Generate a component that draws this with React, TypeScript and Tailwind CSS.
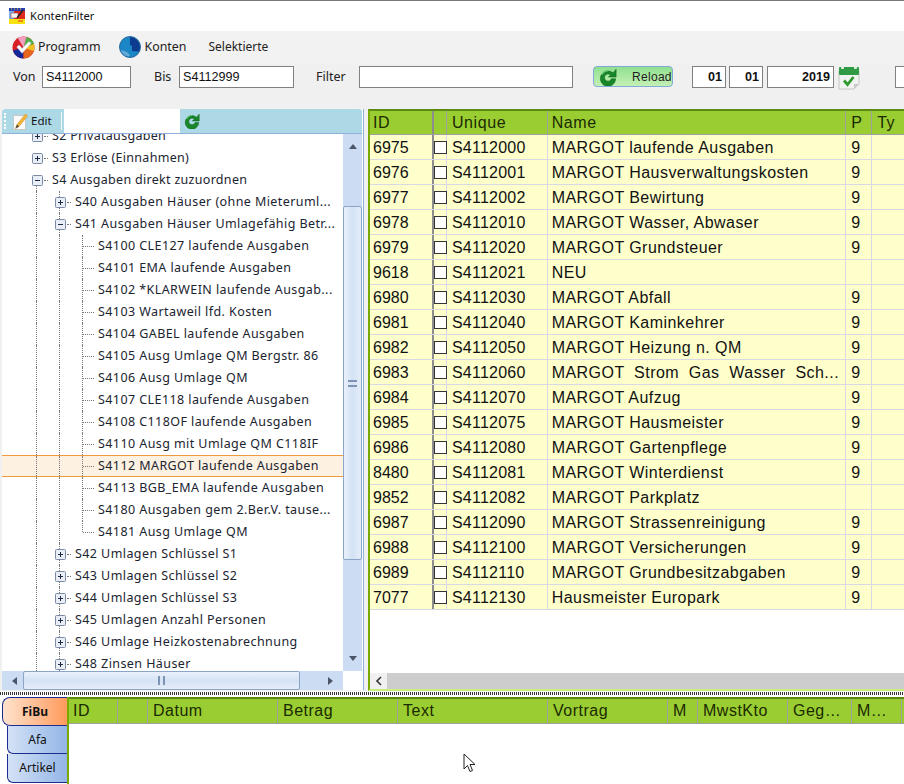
import React from "react";

const Expander = ({ open }: { open?: boolean }) => (
  <svg width="11" height="11" viewBox="0 0 11 11" className="shrink-0 relative">
    <rect x="0.5" y="0.5" width="10" height="10" rx="1" fill="#e9edf5" stroke="#7d8aa3" />
    <path d="M3 5.5h5" stroke="#1d2a44" />
    {!open && <path d="M5.5 3v5" stroke="#1d2a44" />}
  </svg>
);

const VLine = ({ half }: { half?: boolean }) => (
  <div className="w-px h-full shrink-0 flex flex-col">
    <div className={(half ? "h-1/2" : "h-full") + " border-l border-dotted border-[#777]"} />
  </div>
);

const ExpCell = ({ open, guide, lower }: { open?: boolean; guide?: boolean; lower?: boolean }) => (
  <div className="w-[11px] h-full shrink-0 -ml-[4px] relative flex items-center">
    {guide && (
      <div className="absolute left-[4px] top-0 h-full">
        <VLine />
      </div>
    )}
    {lower && (
      <div className="absolute left-[4px] top-[16px] h-[6px] w-px border-l border-dotted border-[#777]" />
    )}
    <Expander open={open} />
  </div>
);

const Conn = ({ w }: { w: string }) => <div className={w + " h-0 shrink-0 border-t border-dotted border-[#777] mr-[4px]"} />;

type Row = { t: string; lvl: 1 | 2 | 3; open?: boolean; sel?: boolean; last?: boolean };
const rows: Row[] = [
  { t: "S2 Privatausgaben", lvl: 1 },
  { t: "S3 Erlöse (Einnahmen)", lvl: 1 },
  { t: "S4 Ausgaben direkt zuzuordnen", lvl: 1, open: true },
  { t: "S40 Ausgaben Häuser (ohne Mieteruml...", lvl: 2 },
  { t: "S41 Ausgaben Häuser Umlagefähig Betr...", lvl: 2, open: true },
  { t: "S4100 CLE127 laufende Ausgaben", lvl: 3 },
  { t: "S4101 EMA laufende Ausgaben", lvl: 3 },
  { t: "S4102 *KLARWEIN laufende Ausgab...", lvl: 3 },
  { t: "S4103 Wartaweil lfd. Kosten", lvl: 3 },
  { t: "S4104 GABEL laufende Ausgaben", lvl: 3 },
  { t: "S4105 Ausg Umlage QM Bergstr. 86", lvl: 3 },
  { t: "S4106 Ausg Umlage QM", lvl: 3 },
  { t: "S4107 CLE118 laufende Ausgaben", lvl: 3 },
  { t: "S4108 C118OF laufende Ausgaben", lvl: 3 },
  { t: "S4110 Ausg mit Umlage QM C118IF", lvl: 3 },
  { t: "S4112 MARGOT laufende Ausgaben", lvl: 3, sel: true },
  { t: "S4113 BGB_EMA laufende Ausgaben", lvl: 3 },
  { t: "S4180 Ausgaben gem 2.Ber.V. tause...", lvl: 3 },
  { t: "S4181 Ausg Umlage QM", lvl: 3, last: true },
  { t: "S42 Umlagen Schlüssel S1", lvl: 2 },
  { t: "S43 Umlagen Schlüssel S2", lvl: 2 },
  { t: "S44 Umlagen Schlüssel S3", lvl: 2 },
  { t: "S45 Umlagen Anzahl Personen", lvl: 2 },
  { t: "S46 Umlage Heizkostenabrechnung", lvl: 2 },
  { t: "S48 Zinsen Häuser", lvl: 2 },
];

const TreeRow = ({ r }: { r: Row }) => (
  <div
    className={
      "flex items-center h-[22px] pl-[34px] text-[12.5px] text-[#1b2430] whitespace-nowrap font-['Noto_Sans',sans-serif] " +
      (r.lvl === 1 ? "tracking-[0.3px] " : "tracking-[0.42px] ") +
      (r.sel ? "bg-[#fdf1e2] border-y border-[#f09a3e]" : "")
    }
  >
    {r.lvl === 1 && (
      <>
        <ExpCell open={r.open} lower={r.open} />
        <div className="w-px shrink-0" />
        <Conn w="w-[4px]" />
      </>
    )}
    {r.lvl === 2 && (
      <>
        <VLine />
        <div className="w-[22px] shrink-0" />
        <ExpCell open={r.open} guide />
        <div className="w-px shrink-0" />
        <Conn w="w-[4px]" />
      </>
    )}
    {r.lvl === 3 && (
      <>
        <VLine />
        <div className="w-[22px] shrink-0" />
        <VLine />
        <div className="w-[22px] shrink-0" />
        <VLine half={r.last} />
        <Conn w="w-[11px]" />
      </>
    )}
    <span>{r.t}</span>
  </div>
);

const data: [string, string, string, string][] = [
  ["6975", "S4112000", "MARGOT laufende Ausgaben", "9"],
  ["6976", "S4112001", "MARGOT Hausverwaltungskosten", "9"],
  ["6977", "S4112002", "MARGOT Bewirtung", "9"],
  ["6978", "S4112010", "MARGOT Wasser, Abwaser", "9"],
  ["6979", "S4112020", "MARGOT Grundsteuer", "9"],
  ["9618", "S4112021", "NEU", ""],
  ["6980", "S4112030", "MARGOT Abfall", "9"],
  ["6981", "S4112040", "MARGOT Kaminkehrer", "9"],
  ["6982", "S4112050", "MARGOT Heizung n. QM", "9"],
  ["6983", "S4112060", "MARGOT  Strom  Gas  Wasser  Sch...", "9"],
  ["6984", "S4112070", "MARGOT Aufzug", "9"],
  ["6985", "S4112075", "MARGOT Hausmeister", "9"],
  ["6986", "S4112080", "MARGOT Gartenpflege", "9"],
  ["8480", "S4112081", "MARGOT Winterdienst", "9"],
  ["9852", "S4112082", "MARGOT Parkplatz", ""],
  ["6987", "S4112090", "MARGOT Strassenreinigung", "9"],
  ["6988", "S4112100", "MARGOT Versicherungen", "9"],
  ["6989", "S4112110", "MARGOT Grundbesitzabgaben", "9"],
  ["7077", "S4112130", "Hausmeister Europark", "9"],
];

const Field = ({ v, w, cls }: { v?: string; w: string; cls?: string }) => (
  <div
    className={
      w +
      " h-[22px] shrink-0 border border-[#808080] bg-white px-[3px] text-[12.6px] leading-[21px] text-[#111] font-['Liberation_Sans',sans-serif] " +
      (cls || "")
    }
  >
    {v}
  </div>
);

const ReloadIcon = ({ s }: { s: number }) => (
  <svg width={s} height={s} viewBox="0 0 20 20" className="shrink-0">
    <path d="M15.600 5.400A8.500 8.500 0 1 0 18.500 12h-4.700a4 4 0 1 1-1-4.300L10.500 10H19V1.500z" fill="#17872a" stroke="#0d5e1c" strokeWidth="0.6" />
    <path d="M3.500 7.500A7 7 0 0 1 10 3.200" stroke="#62c46c" strokeWidth="1.400" fill="none" />
  </svg>
);

const ProgrammIcon = () => (
  <svg width="23" height="23" viewBox="0 0 24 24" className="shrink-0">
    <circle cx="12" cy="12" r="11.500" fill="#d81f26" />
    <path d="M1 15A11.500 11.500 0 0 0 12 23.500L12 12z" fill="#16279a" />
    <path d="M12 23.500A11.500 11.500 0 0 0 22.500 16L12 12z" fill="#e8651e" />
    <path d="M22.500 16A11.500 11.500 0 0 0 23 8L12 12z" fill="#f0c020" />
    <path d="M23 8A11.500 11.500 0 0 0 15 1L12 12z" fill="#4fb04a" />
    <path d="M15 1A11.500 11.500 0 0 0 6 2.200L12 12z" fill="#f2a0c0" />
    <path d="M5 11.500l5.500 6.500L20 7.500l-2.500-1.500-7 7-3-3.500z" fill="#fff" stroke="#cfd8ee" strokeWidth="0.5" />
  </svg>
);

const GlobeIcon = () => (
  <svg width="22" height="22" viewBox="0 0 22 22" className="shrink-0">
    <circle cx="11" cy="11" r="10.500" fill="#1b86c6" stroke="#2c6a9f" />
    <path d="M11 1a10 10 0 0 1 10 10c0 2-.5 3-1.500 4.500L13 15v-5l-2-1z" fill="#0d3c8e" />
    <path d="M2 14c3 1 7 1 9 6 -4 1-8-2-9-6z" fill="#63a9d6" />
  </svg>
);

const CalendarIcon = () => (
  <svg width="22" height="25" viewBox="0 0 22 25" className="shrink-0">
    <path d="M1 6h20v13l-5 5H1z" fill="#f1f3f1" stroke="#c4c8c4" />
    <rect x="1" y="2" width="20" height="8" rx="1" fill="#2f9b45" />
    <rect x="3" y="1" width="3" height="3" rx="1" fill="#e3efe5" />
    <rect x="16" y="1" width="3" height="3" rx="1" fill="#e3efe5" />
    <path d="M6 15.500l3.500 4 6-7.500" stroke="#2f9b2f" strokeWidth="2.800" fill="none" />
    <path d="M16 24l5-5h-5z" fill="#c9c9c9" />
  </svg>
);

const PencilIcon = () => (
  <svg width="15" height="17" viewBox="0 0 15 17" className="shrink-0">
    <rect x="0.500" y="2.500" width="12" height="14" fill="#fafafa" stroke="#c8c8c8" />
    <path d="M2.500 15.500L4 11.500 12.500 1l2 2L6 13.500z" fill="#f3b43a" stroke="#c98a1a" strokeWidth="0.5" />
    <path d="M2.500 15.500L4 11.500l2 2z" fill="#444" />
  </svg>
);

const AppIcon = () => (
  <svg width="16" height="16" viewBox="0 0 16 16" className="shrink-0">
    <rect width="16" height="16" fill="#fff" />
    <rect y="0" width="16" height="3" fill="#2b3fa8" />
    <path d="M2 1h1M5 1h1M8 1h1M11 1h1" stroke="#f0d050" />
    <rect y="3" width="5" height="8" fill="#7fb5e8" />
    <rect x="5" y="3" width="11" height="8" fill="#e02a20" />
    <rect x="2" y="5" width="7" height="5" fill="#f4f4f4" stroke="#8a2030" strokeWidth="0.5" />
    <rect y="11" width="16" height="5" fill="#f7e10e" />
    <path d="M9 13h5" stroke="#e02a20" />
    <path d="M8 10l6-8" stroke="#222" strokeWidth="1.400" />
  </svg>
);

const Tri = ({ d }: { d: "u" | "d" | "l" | "r" }) => {
  const p = { u: "M0 6L4 1l4 5z", d: "M0 2h8L4 7z", l: "M6 0v8L1 4z", r: "M2 0v8l5-4z" }[d];
  return (
    <svg width="8" height="8" viewBox="0 0 8 8" className="shrink-0">
      <path d={p} fill="#4a5568" />
    </svg>
  );
};

const headerCols = [
  ["ID", "w-[49px] pl-[4px]"],
  ["", "w-[30px] pl-[5px]"],
  ["Datum", "w-[130px] pl-[5px]"],
  ["Betrag", "w-[120px] pl-[5px]"],
  ["Text", "w-[150px] pl-[5px]"],
  ["Vortrag", "w-[120px] pl-[5px]"],
  ["M", "w-[30px] pl-[5px]"],
  ["MwstKto", "w-[90px] pl-[5px]"],
  ["Geg…", "w-[64px] pl-[5px]"],
  ["M…", "w-[50px] pl-[5px]"],
];

const Label = ({ t, w }: { t: string; w: string }) => (
  <span className={w + " shrink-0 leading-[22px] font-['Noto_Sans',sans-serif]"}>{t}</span>
);

export default function App() {
  return (
    <div className="w-[904px] h-[784px] overflow-hidden bg-[#f0f0f0] flex flex-col font-['Liberation_Sans',sans-serif]">
      {/* title */}
      <div className="h-[31px] shrink-0 bg-white border-t border-[#777] flex items-center pl-[9px] gap-[5px]">
        <AppIcon />
        <span className="text-[11.2px] text-[#111] font-['Noto_Sans',sans-serif]">KontenFilter</span>
      </div>
      {/* menu */}
      <div className="h-[32px] shrink-0 bg-[#f2f2f2] flex items-center pl-[12px] text-[12.4px] text-[#222] font-['Noto_Sans',sans-serif]">
        <ProgrammIcon />
        <span className="ml-[3px]">Programm</span>
        <div className="ml-[19px]"><GlobeIcon /></div>
        <span className="ml-[3px]">Konten</span>
        <span className="ml-[22px] text-[12px]">Selektierte</span>
      </div>
      {/* filter row */}
      <div className="h-[46px] shrink-0 flex items-start pt-[3px] text-[12.5px] text-[#222] overflow-hidden">
        <Label t="Von" w="ml-[13px] w-[29px]" />
        <Field v="S4112000" w="w-[89px]" />
        <Label t="Bis" w="ml-[23px] w-[25px]" />
        <Field v="S4112999" w="w-[115px]" />
        <Label t="Filter" w="ml-[22px] w-[43px]" />
        <Field w="w-[214px]" />
        <div className="ml-[20px] w-[80px] h-[21px] shrink-0 rounded-[4px] border border-[#7fa9d8] bg-gradient-to-b from-[#8fe08f] to-[#c4f0b4] flex items-center pl-[5px] gap-[15px]">
          <ReloadIcon s={18} />
          <span className="text-[12px] text-[#222] tracking-[0.3px]">Reload</span>
        </div>
        <Field v="01" w="w-[34px] ml-[19px]" cls="text-right font-bold" />
        <Field v="01" w="w-[34px] ml-[3px]" cls="text-right font-bold" />
        <Field v="2019" w="w-[67px] ml-[4px]" cls="text-right font-bold" />
        <div className="ml-[4px] -mt-[1px] shrink-0"><CalendarIcon /></div>
        <Field w="w-[40px] ml-[35px]" />
      </div>
      {/* panels */}
      <div className="h-[582px] shrink-0 flex">
        {/* left */}
        <div className="w-[362px] shrink-0 ml-[2px] mb-[1px] pr-[1px] flex flex-col border-r border-[#8fb0d8] bg-white">
          <div className="h-[24px] shrink-0 bg-[#add8e6] flex items-center rounded-t-[3px]">
            <div className="w-[4px] h-[16px] ml-[2px] border-l-2 border-dotted border-white" />
            <div className="ml-[5px]"><PencilIcon /></div>
            <span className="ml-[3px] text-[11.500px] text-[#111] font-['Noto_Sans',sans-serif]">Edit</span>
            <div className="w-px h-[18px] bg-[#f2f7f9] ml-[9px]" />
            <div className="ml-[2px] w-[116px] h-[24px] bg-white" />
            <div className="ml-[4px]"><ReloadIcon s={16} /></div>
          </div>
          <div className="flex-1 min-h-0 flex border-t border-[#8fb0d8]">
            <div className="flex-1 min-w-0 overflow-hidden">
              <div className="-mt-[9px]">
                {rows.map((r, i) => (
                  <TreeRow r={r} key={i} />
                ))}
              </div>
            </div>
            <div className="w-[19px] shrink-0 bg-[#ccdcf3] flex flex-col items-center py-[9px]">
              <Tri d="u" />
              <div className="mt-[55px] h-[354px] w-full rounded-[2px] border border-[#8aa5c8] bg-gradient-to-r from-[#eaf1fb] via-[#d4e2f5] to-[#e4edf9] flex items-center justify-center">
                <div className="w-[9px] h-[7px] border-y-2 border-double border-[#7d93b3]" />
              </div>
              <div className="flex-1" />
              <Tri d="d" />
            </div>
          </div>
          <div className="h-[19px] shrink-0 flex">
            <div className="flex-1 bg-[#ccdcf3] flex items-center px-[9px]">
              <Tri d="l" />
              <div className="ml-[4px] w-[277px] h-[19px] rounded-[2px] border border-[#8aa5c8] bg-gradient-to-b from-[#eaf1fb] via-[#d4e2f5] to-[#e4edf9] flex items-center justify-center">
                <div className="w-[7px] h-[9px] border-x-2 border-double border-[#7d93b3]" />
              </div>
              <div className="flex-1" />
              <Tri d="r" />
            </div>
            <div className="w-[19px] bg-white" />
          </div>
        </div>
        {/* right */}
        <div className="flex-1 min-w-0 ml-[4px] flex flex-col bg-white border-l-2 border-l-[#79a800] border-t-2 border-t-[#5b8a10] border-b-2 border-b-[#c8ee7a] overflow-hidden">
          <div className="h-[24px] shrink-0 flex bg-[#9acd32] border-b border-[#a0a0a0] text-[16px] tracking-[0.6px] text-[#1a2a00] leading-[23px] w-[560px]">
            <div className="w-[64px] pl-[3px] border-r-[2px] border-[#8d8d8d]">ID</div>
            <div className="w-[13px] border-r border-[#a0a0a0]" />
            <div className="w-[101px] pl-[5px] border-r border-[#a0a0a0]">Unique</div>
            <div className="w-[299px] pl-[4px] border-r border-[#a0a0a0]">Name</div>
            <div className="w-[26px] pl-[5px] border-r border-[#a0a0a0]">P</div>
            <div className="w-[58px] pl-[5px]">Ty</div>
          </div>
          <div className="flex-1 min-h-0">
            {data.map((d) => (
              <div key={d[0]} className="h-[25px] flex bg-[#ffffcc] border-b border-[#d9d9e6] text-[16px] leading-[26px] text-[#111] w-[560px] whitespace-pre">
                <div className="w-[64px] pl-[3px] border-r-[2px] border-[#8d8d8d]">{d[0]}</div>
                <div className="w-[13px] border-r border-[#d9d9e6] flex items-center justify-start pt-[1px]">
                  <div className="w-[13px] h-[13px] border border-[#333] bg-white shrink-0" />
                </div>
                <div className="w-[101px] pl-[5px] border-r border-[#d9d9e6] tracking-[0.25px]">{d[1]}</div>
                <div className="w-[299px] pl-[4px] border-r border-[#d9d9e6] tracking-[0.45px]">{d[2]}</div>
                <div className="w-[26px] pl-[5px] border-r border-[#d9d9e6]">{d[3]}</div>
                <div className="w-[58px]" />
              </div>
            ))}
          </div>
          <div className="h-[16px] shrink-0 flex">
            <div className="w-[17px] bg-[#f0f0f0] flex items-center justify-center">
              <svg width="8" height="10" viewBox="0 0 8 10"><path d="M6 1L2 5l4 4" stroke="#333" strokeWidth="1.600" fill="none" /></svg>
            </div>
            <div className="flex-1 bg-[#cdcdcd]" />
          </div>
        </div>
      </div>
      {/* splitter */}
      <div className="h-[6px] shrink-0 bg-white pt-[1px]">
        <div className="h-[3px] bg-[repeating-linear-gradient(90deg,#333_0,#333_1px,#fff_1px,#fff_2px)]" />
      </div>
      {/* bottom */}
      <div className="flex-1 min-h-0 flex bg-white">
        <div className="w-[67px] shrink-0 flex flex-col items-end text-[12px] text-[#111] font-['Noto_Sans',sans-serif]">
          <div className="w-[65px] h-[29px] shrink-0 rounded-tl-[8px] rounded-bl-[8px] border border-r-0 border-[#1d2d8f] bg-gradient-to-r from-[#fde2cc] to-[#ff9a5a] flex items-center justify-center font-bold">FiBu</div>
          <div className="w-[60px] h-[28px] shrink-0 rounded-bl-[6px] border border-t-0 border-r-0 border-[#1d2d8f] bg-gradient-to-r from-[#d4e2f6] to-[#93b5e6] flex items-center justify-center">Afa</div>
          <div className="w-[60px] h-[29px] shrink-0 rounded-bl-[6px] border border-t-0 border-r-0 border-[#1d2d8f] bg-gradient-to-r from-[#d4e2f6] to-[#93b5e6] flex items-center justify-center">Artikel</div>
        </div>
        <div className="flex-1 min-w-0 border-l-2 border-[#79a800]">
          <div className="h-[27px] flex bg-[#9acd32] border-t-2 border-[#5b8a10] border-b border-b-[#a0a0a0] text-[16px] tracking-[0.5px] leading-[24px] text-[#1a2a00] whitespace-nowrap">
            {headerCols.map(([t, w], i) => (
              <div key={i} className={w + " shrink-0 border-r border-[#a0a0a0]"}>{t}</div>
            ))}
          </div>
          <div className="ml-[394px] mt-[29px]">
            <svg width="13" height="21" viewBox="0 0 13 21">
              <path d="M1 1v15l3.500-3.500 2.500 6 2.500-1-2.500-6H12z" fill="#fff" stroke="#222" strokeWidth="1" />
            </svg>
          </div>
        </div>
      </div>
    </div>
  );
}
